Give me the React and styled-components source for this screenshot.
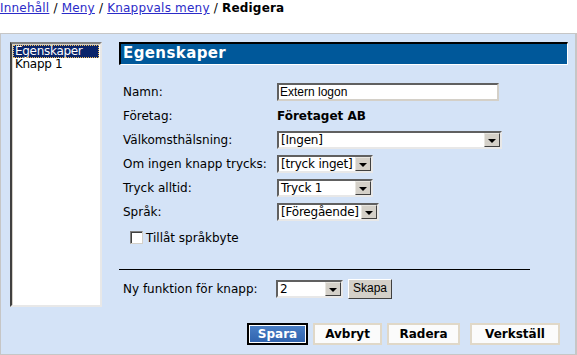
import React from "react";
import styled, { createGlobalStyle } from "styled-components";

const GlobalStyle = createGlobalStyle`
  html, body {
    margin: 0;
    padding: 0;
    background: #ffffff;
  }
  body {
    font-family: "DejaVu Sans", Verdana, sans-serif;
    font-size: 12px;
    color: #000000;
  }
`;

const Page = styled.div`
  width: 577px;
  height: 355px;
  overflow: hidden;
`;

const Breadcrumb = styled.div`
  height: 33px;
  line-height: 16px;
  font-size: 12px;
  letter-spacing: 0.2px;
`;

const Crumb = styled.a`
  color: #2b2bc8;
  text-decoration: underline;
`;

const Current = styled.b`
  font-weight: bold;
`;

const Panel = styled.div`
  box-sizing: border-box;
  width: 577px;
  height: 322px;
  background: #d4e3f7;
  border: 1px solid #c6c6c6;
  border-right-width: 2px;
  padding: 8px 0 0 9px;
  display: flex;
  gap: 17px;
`;

const ListBox = styled.div`
  box-sizing: border-box;
  width: 92px;
  height: 265px;
  background: #ffffff;
  border: 2px solid;
  border-color: #808080 #e8e8e8 #e8e8e8 #404040;
  box-shadow: inset 1px 1px 0 #d4d0c8;
  padding: 1px 1px;
`;

const ListItem = styled.div`
  height: 13px;
  line-height: 13px;
  padding-left: 2px;
  font-size: 12px;
  letter-spacing: -0.3px;
  color: ${p => (p.$selected ? "#ffffff" : "#000000")};
  background: ${p => (p.$selected ? "#0a246a" : "transparent")};
  outline: ${p => (p.$selected ? "1px dotted #f0c060" : "none")};
  outline-offset: -1px;
`;

const Main = styled.div`
  width: 449px;
  display: flex;
  flex-direction: column;
`;

const Header = styled.div`
  box-sizing: border-box;
  height: 23px;
  background: #00589a;
  border-top: 2px solid #000000;
  border-left: 2px solid #000000;
  border-right: 1px solid #ffffff;
  border-bottom: 1px solid #ffffff;
  color: #ffffff;
  font-weight: bold;
  font-size: 15px;
  line-height: 19px;
  padding-left: 2px;
  letter-spacing: 0.4px;
`;

const Form = styled.div`
  margin-top: 15px;
  padding-left: 4px;
  display: grid;
  grid-template-columns: 154px 1fr;
  grid-auto-rows: 24px;
  align-items: center;
`;

const Label = styled.div`
  letter-spacing: 0px;
  white-space: nowrap;
`;

const Value = styled.div`
  font-weight: bold;
  letter-spacing: 0px;
`;

const TextInput = styled.div`
  box-sizing: border-box;
  width: 222px;
  height: 18px;
  background: #ffffff;
  border: 2px solid;
  border-color: #606060 #d4d0c8 #d4d0c8 #606060;
  font-family: "Liberation Sans", Arial, sans-serif;
  font-size: 12px;
  line-height: 14px;
  padding-left: 1px;
`;

const Select = styled.div`
  box-sizing: border-box;
  width: ${p => p.$width}px;
  height: 18px;
  background: #ffffff;
  border: 2px solid;
  border-color: #606060 #e8e8e8 #e8e8e8 #606060;
  display: flex;
  align-items: stretch;
`;

const SelectText = styled.div`
  flex: 1;
  padding-left: 2px;
  line-height: 14px;
  font-size: 12px;
  letter-spacing: -0.2px;
  white-space: nowrap;
  overflow: hidden;
`;

const Arrow = styled.div`
  box-sizing: border-box;
  width: 16px;
  flex: none;
  background: #d4d0c8;
  border: 1px solid;
  border-color: #e8e6e0 #404040 #404040 #e8e6e0;
  display: flex;
  align-items: center;
  justify-content: center;

  &::after {
    content: "";
    border-left: 4px solid transparent;
    border-right: 4px solid transparent;
    border-top: 4px solid #000000;
    margin-top: 1px;
  }
`;

const CheckRow = styled.label`
  grid-column: 1 / 3;
  display: flex;
  align-items: center;
  gap: 3px;
  padding-left: 7px;
  margin-top: 3px;
`;

const Box = styled.span`
  box-sizing: border-box;
  width: 13px;
  height: 13px;
  background: #ffffff;
  border: 1px solid;
  border-color: #808080 #d4d0c8 #d4d0c8 #808080;
  box-shadow: inset 1px 1px 0 #404040;
`;

const Rule = styled.div`
  width: 411px;
  height: 1px;
  background: #000000;
  margin-top: 21px;
`;

const NewRow = styled.div`
  margin-top: 9px;
  padding-left: 4px;
  display: flex;
  align-items: center;
  gap: 5px;
  height: 20px;
`;

const NewLabel = styled(Label)`
  width: 148px;
`;

const GrayButton = styled.div`
  box-sizing: border-box;
  height: 20px;
  padding: 0 4px;
  background: #d4d0c8;
  border: 1px solid;
  border-color: #ffffff #404040 #404040 #ffffff;
  font-family: "Liberation Sans", Arial, sans-serif;
  font-size: 12px;
  line-height: 17px;
`;

const Actions = styled.div`
  margin-top: 24px;
  padding-right: 8px;
  display: flex;
  justify-content: flex-end;
  gap: 5px;
`;

const Button = styled.div`
  box-sizing: border-box;
  width: ${p => p.$width}px;
  height: 22px;
  margin-left: ${p => p.$gap || 0}px;
  text-align: center;
  font-weight: bold;
  font-size: 12px;
  line-height: 18px;
  color: ${p => (p.$primary ? "#ffffff" : "#000000")};
  background: ${p =>
    p.$primary
      ? "linear-gradient(#4a7fc6, #2f62ad)"
      : "#fbfbfb"};
  border: 2px solid ${p => (p.$primary ? "#000000" : "#e0d8c8")};
  box-shadow: ${p => (p.$primary ? "inset 0 0 0 1px #ffffff" : "none")};
`;

const DropDown = ({ width, children }) => (
  <Select $width={width}>
    <SelectText>{children}</SelectText>
    <Arrow />
  </Select>
);

export default function App() {
  return (
    <Page>
      <GlobalStyle />
      <Breadcrumb>
        <Crumb href="#">Innehåll</Crumb> / <Crumb href="#">Meny</Crumb> /{" "}
        <Crumb href="#">Knappvals meny</Crumb> / <Current>Redigera</Current>
      </Breadcrumb>
      <Panel>
        <ListBox>
          <ListItem $selected>Egenskaper</ListItem>
          <ListItem>Knapp 1</ListItem>
        </ListBox>
        <Main>
          <Header>Egenskaper</Header>
          <Form>
            <Label>Namn:</Label>
            <TextInput>Extern logon</TextInput>
            <Label>Företag:</Label>
            <Value>Företaget AB</Value>
            <Label>Välkomsthälsning:</Label>
            <DropDown width={225}>[Ingen]</DropDown>
            <Label>Om ingen knapp trycks:</Label>
            <DropDown width={96}>[tryck inget]</DropDown>
            <Label>Tryck alltid:</Label>
            <DropDown width={96}>Tryck 1</DropDown>
            <Label>Språk:</Label>
            <DropDown width={102}>[Föregående]</DropDown>
            <CheckRow>
              <Box />
              Tillåt språkbyte
            </CheckRow>
          </Form>
          <Rule />
          <NewRow>
            <NewLabel>Ny funktion för knapp:</NewLabel>
            <DropDown width={67}>2</DropDown>
            <GrayButton>Skapa</GrayButton>
          </NewRow>
          <Actions>
            <Button $primary $width={61}>Spara</Button>
            <Button $width={69}>Avbryt</Button>
            <Button $width={73}>Radera</Button>
            <Button $width={90} $gap={5}>Verkställ</Button>
          </Actions>
        </Main>
      </Panel>
    </Page>
  );
}
